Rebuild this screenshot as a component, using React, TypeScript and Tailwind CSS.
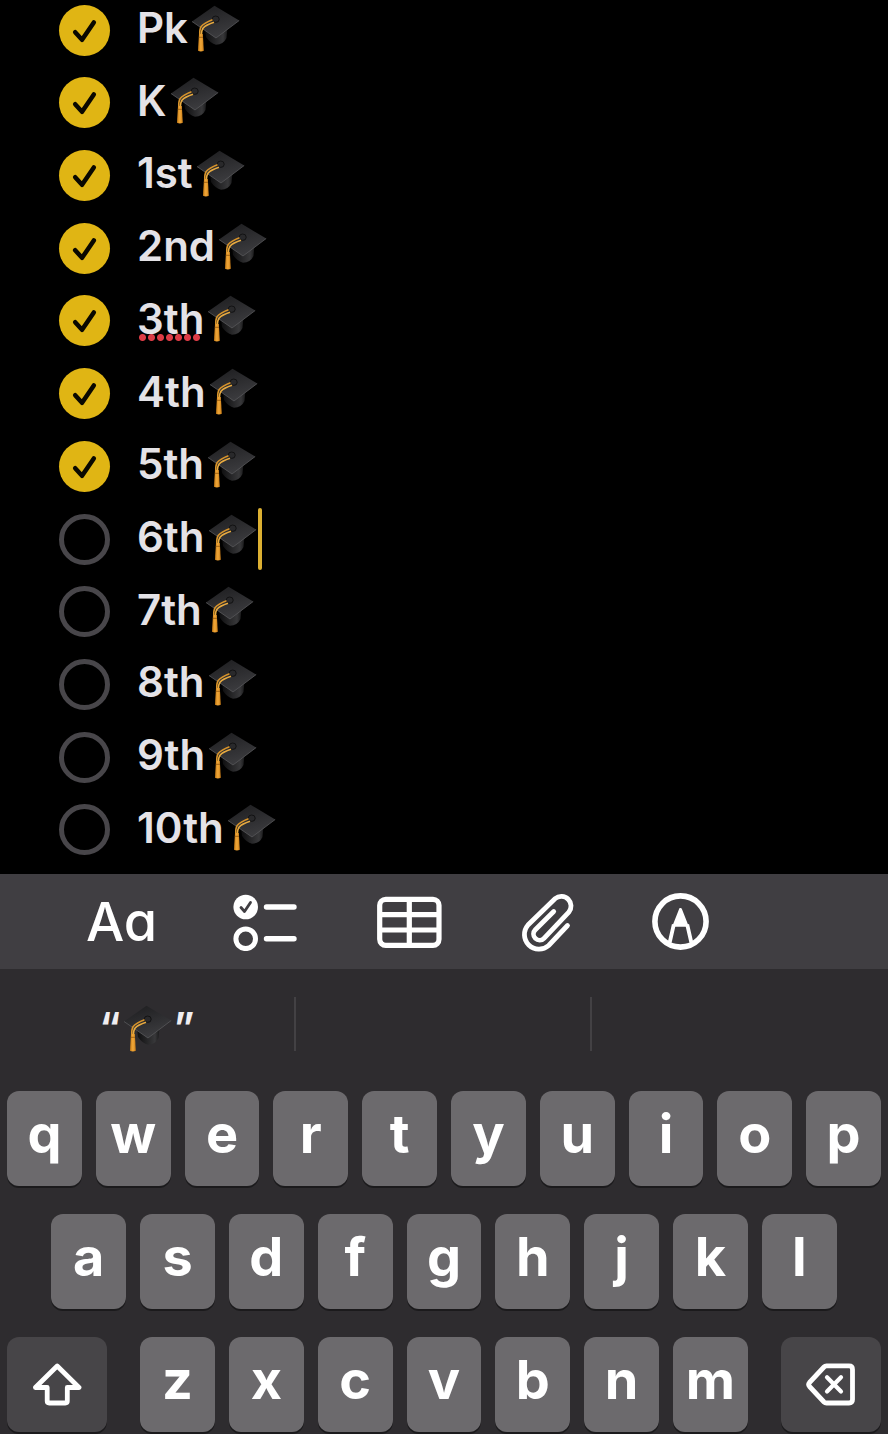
import React, { useState } from "react";

interface Item {
  id: string;
  text: string;
  done: boolean;
  misspelled?: boolean;
}

const initialItems: Item[] = [
  { id: "pk", text: "Pk", done: true },
  { id: "k", text: "K", done: true },
  { id: "g1", text: "1st", done: true },
  { id: "g2", text: "2nd", done: true },
  { id: "g3", text: "3th", done: true, misspelled: true },
  { id: "g4", text: "4th", done: true },
  { id: "g5", text: "5th", done: true },
  { id: "g6", text: "6th", done: false },
  { id: "g7", text: "7th", done: false },
  { id: "g8", text: "8th", done: false },
  { id: "g9", text: "9th", done: false },
  { id: "g10", text: "10th", done: false },
];

const GradCap = () => (
  <svg viewBox="0 0 49 47" className="h-[47px] w-[49px] shrink-0" aria-hidden="true">
    <defs>
      <linearGradient id="board" x1="0" y1="0" x2="0.4" y2="1">
        <stop offset="0" stopColor="#1c1c1e" />
        <stop offset="1" stopColor="#3b3b3e" />
      </linearGradient>
      <linearGradient id="skull" x1="0" y1="0" x2="1" y2="0">
        <stop offset="0" stopColor="#0e0e0f" />
        <stop offset="0.8" stopColor="#38383a" />
        <stop offset="1" stopColor="#19191a" />
      </linearGradient>
      <linearGradient id="tassel" x1="0" y1="0" x2="1" y2="0">
        <stop offset="0" stopColor="#c67a14" />
        <stop offset="0.5" stopColor="#f2a93a" />
        <stop offset="1" stopColor="#c97c17" />
      </linearGradient>
    </defs>
    <path d="M14 23 L15 32 Q19.500 38.500 25 39.700 Q32.500 39.500 35.500 33 L36.500 22 Z" fill="url(#skull)" />
    <path d="M1 16.500 L23.500 0.700 L48.200 15.500 L25 33 Z" fill="url(#board)" />
    <path d="M1 16.500 L25 33 L48.200 15.500" fill="none" stroke="#58585b" strokeWidth="0.8" />
    <ellipse cx="24.700" cy="14.200" rx="3.500" ry="3.200" fill="#29292b" stroke="#101011" strokeWidth="0.9" />
    <path d="M21.500 14.800 Q13 18 10.200 21.500 Q8.500 24 8.800 30" fill="none" stroke="#d8942b" strokeWidth="1.6" />
    <path d="M23 17.300 Q15 20 12.200 23 Q10.500 25 10.300 30" fill="none" stroke="#e9ab40" strokeWidth="1.6" />
    <path d="M8 29 h3.800 l0.200 3 l0.800 13.800 q-2.900 1.400 -5.800 0 l0.800 -13.800 z" fill="url(#tassel)" />
    <path d="M7.800 32.300 h4.200" stroke="#8f560d" strokeWidth="0.8" />
  </svg>
);

const ChecklistIcon = () => (
  <svg viewBox="0 0 66 59" className="h-[59px] w-[66px]" fill="none" strokeLinecap="round" strokeLinejoin="round">
    <circle cx="13.7" cy="15" r="12.3" fill="#fff" />
    <path d="M9 15.500 L12.500 19.500 L18.500 10.500" stroke="#403e42" strokeWidth="2.8" />
    <circle cx="13.700" cy="46.800" r="9.800" stroke="#fff" strokeWidth="5" />
    <path d="M34.500 15 H62 M34.500 46.800 H62" stroke="#fff" strokeWidth="5.4" />
  </svg>
);

const TableIcon = () => (
  <svg viewBox="0 0 66 59" className="h-[59px] w-[66px]" fill="none" stroke="#fff" strokeWidth="5.2">
    <rect x="3.700" y="7.300" width="59.300" height="46" rx="6" />
    <path d="M33.300 7.300 V53.300 M3.700 22.600 H63 M3.700 38 H63" />
  </svg>
);

const PaperclipIcon = () => (
  <svg
    viewBox="0 0 54 61"
    className="h-[61px] w-[54px]"
    fill="none"
    stroke="#fff"
    strokeWidth="4.8"
    strokeLinecap="round"
  >
    <path d="M47.500 34.500 L28.700 54.500 A14.600 14.600 0 0 1 8 34 L35.200 7.500 A9.700 9.700 0 0 1 48.800 21.200 L24 47.300 A6.100 6.100 0 0 1 15.300 38.700 L33.700 20.500" />
  </svg>
);

const MarkupIcon = () => (
  <svg viewBox="0 0 57 57" className="size-[57px]" fill="none" stroke="#fff" strokeLinejoin="round">
    <circle cx="28.500" cy="28.500" r="25.600" strokeWidth="5.6" />
    <path d="M28.500 16.500 L22.300 32.300 H34.700 Z" fill="#fff" strokeWidth="3" />
    <path d="M21.800 31.500 L17.800 49 M35.200 31.500 L39.200 49" strokeWidth="3.8" />
  </svg>
);

const ShiftIcon = () => (
  <svg viewBox="0 0 50 44" className="h-11 w-[50px]" fill="none" stroke="#fff" strokeWidth="4.8" strokeLinejoin="round">
    <path d="M25.200 3 L47 24.500 H35.300 V38 Q35.300 40 33.300 40 H17.200 Q15.200 40 15.200 38 V24.500 H3.400 Z" />
  </svg>
);

const BackspaceIcon = () => (
  <svg
    viewBox="0 0 50 44"
    className="h-11 w-[50px]"
    fill="none"
    stroke="#fff"
    strokeWidth="4.8"
    strokeLinejoin="round"
    strokeLinecap="round"
  >
    <path d="M20.500 2.900 H43 Q46.500 2.900 46.500 6.400 V36.600 Q46.500 40 43 40 H20.500 Q19 40 18 39 L3.500 23.500 Q1.800 21.500 3.500 19.500 L18 4 Q19 2.900 20.500 2.900 Z" />
    <path d="M21 14.300 L35 28.500 M35 14.300 L21 28.500" strokeWidth="4.2" />
  </svg>
);

interface ChecklistRowProps {
  item: Item;
  active: boolean;
  onToggle: (id: string) => void;
}

const ChecklistRow: React.FC<ChecklistRowProps> = ({ item, active, onToggle }) => {
  return (
    <li className="flex h-[52px] items-center">
      <span className="relative mr-[27px] size-[51px] shrink-0">
        <input
          id={item.id}
          type="checkbox"
          checked={item.done}
          onChange={() => onToggle(item.id)}
          className="peer block size-[51px] appearance-none rounded-full border-[5px] border-[#48464a] checked:border-0 checked:bg-[#e0b514]"
        />
        <svg
          viewBox="0 0 52 52"
          className="pointer-events-none absolute inset-0 hidden peer-checked:block"
          fill="none"
          stroke="#0a0800"
          strokeWidth="4.6"
          strokeLinecap="round"
          strokeLinejoin="round"
        >
          <path d="M16.500 27.800 L23.500 35.500 L35.500 17.800" />
        </svg>
      </span>
      <label htmlFor={item.id} className="flex items-center gap-[3px] pb-1">
        <span className="relative">
          {item.text}
          {item.misspelled && (
            <span className="absolute bottom-[2px] left-px h-[7px] w-[63px] bg-[radial-gradient(circle,#dc3c46_3px,transparent_4px)] bg-[length:9px_7px] bg-repeat-x" />
          )}
        </span>
        <GradCap />
      </label>
      {active && <span className="ml-px h-[62px] w-1 rounded-full bg-[#dcb032]" />}
    </li>
  );
};

const Key = ({ letter, className = "" }: { letter: string; className?: string }) => (
  <button
    type="button"
    className={`col-span-2 flex h-[95px] items-center justify-center rounded-xl bg-[#6c6a6d] pb-[10px] text-[54px] leading-none font-bold shadow-[0_2px_0_#1b1a1c] ${className}`}
  >
    {letter}
  </button>
);

const Keyboard = () => (
  <div className="grid grid-cols-20 gap-x-[14px] gap-y-7 px-[7px] pb-[2px]">
    {"qwertyuiop".split("").map((letter) => (
      <Key key={letter} letter={letter} />
    ))}
    {"asdfghjkl".split("").map((letter) => (
      <Key key={letter} letter={letter} className={letter === "a" ? "col-start-2" : ""} />
    ))}
    <button
      type="button"
      aria-label="Shift"
      className="col-span-3 col-start-1 flex h-[95px] w-[100px] items-center justify-center rounded-xl bg-[#474548] shadow-[0_2px_0_#1b1a1c]"
    >
      <ShiftIcon />
    </button>
    {"zxcvbnm".split("").map((letter) => (
      <Key key={letter} letter={letter} />
    ))}
    <button
      type="button"
      aria-label="Delete"
      className="col-span-3 flex h-[95px] w-[100px] items-center justify-center justify-self-end rounded-xl bg-[#474548] shadow-[0_2px_0_#1b1a1c]"
    >
      <BackspaceIcon />
    </button>
  </div>
);

const App = () => {
  const [items, setItems] = useState(initialItems);

  const toggleItem = (id: string) => {
    setItems(items.map((item) => (item.id === id ? { ...item, done: !item.done } : item)));
  };

  return (
    <div className="flex min-h-screen flex-col bg-black font-['Inter',sans-serif] text-white">
      <ul className="flex flex-1 flex-col justify-between pt-1 pb-[18px] pl-[59px] text-[42px] leading-[48px] font-semibold text-[#e4e2e6]">
        {items.map((item) => (
          <ChecklistRow key={item.id} item={item} active={item.id === "g6"} onToggle={toggleItem} />
        ))}
      </ul>

      <div className="flex h-[95px] items-center gap-[78px] bg-[#403e42] pl-[86px]">
        <button
          type="button"
          aria-label="Format"
          className="w-[68px] text-[54px] leading-none font-medium [font-feature-settings:'cv11']"
        >
          Aa
        </button>
        <button type="button" aria-label="Checklist">
          <ChecklistIcon />
        </button>
        <button type="button" aria-label="Table">
          <TableIcon />
        </button>
        <button type="button" aria-label="Attach">
          <PaperclipIcon />
        </button>
        <button type="button" aria-label="Markup">
          <MarkupIcon />
        </button>
      </div>

      <div className="bg-[#2e2c2f]">
        <div className="grid grid-cols-3 pt-7 pb-10">
          <button
            type="button"
            className="flex h-[54px] items-center justify-center gap-[2px] border-r-2 border-[#434144] pt-2 text-[42px] leading-none font-semibold text-[#f0eef1]"
          >
            <span>“</span>
            <GradCap />
            <span>”</span>
          </button>
          <span className="border-r-2 border-[#434144]" />
        </div>
        <Keyboard />
      </div>
    </div>
  );
};

export default App;
